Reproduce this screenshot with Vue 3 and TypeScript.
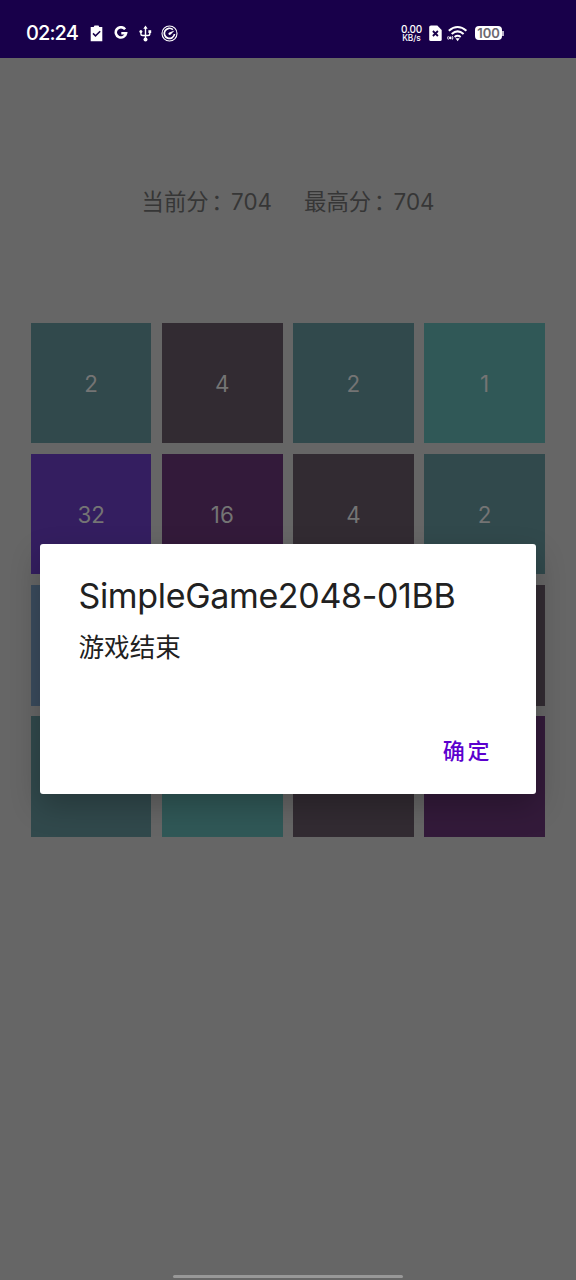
<script setup lang="ts">
interface Tile {
  kind: string
  value?: number
}

const tiles: Tile[] = [
  { kind: 'two', value: 2 },
  { kind: 'four', value: 4 },
  { kind: 'two', value: 2 },
  { kind: 'one', value: 1 },
  { kind: 'thirty-two', value: 32 },
  { kind: 'sixteen', value: 16 },
  { kind: 'four', value: 4 },
  { kind: 'two', value: 2 },
  { kind: 'eight' },
  { kind: 'two' },
  { kind: 'one' },
  { kind: 'four' },
  { kind: 'two' },
  { kind: 'one' },
  { kind: 'four' },
  { kind: 'sixteen' },
]
</script>

<template>
  <div class="screen">
    <header class="status">
      <span class="clock">02:24</span>
      <svg class="clipboard" width="13" height="17" viewBox="0 0 13 17">
        <path d="M.7 2h3l.8-1.600h4L9.300 2h3v14.300H.7z" fill="#fff" />
        <path d="M3 8.400l2.500 2.500 4.700-4.700" fill="none" stroke="#18004a" stroke-width="1.500" />
      </svg>
      <svg class="google" width="14" height="14" viewBox="0 0 14 14">
        <path d="M11.100 3.200A5.200 5.200 0 1 0 12.100 7.200H7.300" fill="none" stroke="#fff" stroke-width="2.500" />
      </svg>
      <svg class="usb" width="13" height="17" viewBox="0 0 13 17">
        <path d="M6.500 2v12M1.900 6.500v2.200q0 1.800 1.800 1.800h5.300q1.800 0 1.800-1.800V6.500" fill="none" stroke="#fff" stroke-width="1.400" />
        <path d="M4.300 3.800L6.500.6l2.200 3.200z" fill="#fff" />
        <circle cx="6.500" cy="14.400" r="2" fill="#fff" />
        <circle cx="1.900" cy="6.600" r="1.500" fill="#fff" />
        <path d="M9.400 5.200h2.800V8H9.400z" fill="#fff" />
      </svg>
      <svg class="gauge" width="17" height="17" viewBox="0 0 17 17">
        <circle cx="8.500" cy="8.500" r="7.500" fill="none" stroke="#fff" stroke-width="1.100" />
        <path d="M11.900 4.600A5.100 5.100 0 1 0 13.500 9" fill="none" stroke="#fff" stroke-width="1.700" />
        <path d="M13.600 5.400L9.700 9.400Q8.500 10.400 7.500 9.300 7 8 8.300 7.400z" fill="#fff" />
      </svg>
      <div class="speed"><span class="rate">0.00</span><span class="unit">KB/s</span></div>
      <svg class="sim" width="13" height="17" viewBox="0 0 13 17">
        <path d="M2 .5h6.300L12.700 5v9.500q0 1.500-1.500 1.500H1.700Q.2 16 .2 14.500V2Q.2.500 2 .5z" fill="#fff" />
        <path d="M3.900 6l5 5M8.900 6l-5 5" stroke="#18004a" stroke-width="1.800" />
      </svg>
      <svg class="wifi" width="21" height="17" viewBox="0 0 21 17">
        <g fill="none" stroke="#fff">
          <path d="M1.800 5.700Q10.600 -1.700 19.400 5.700" stroke-width="2.100" />
          <path d="M4.700 9Q10.600 3.900 16.600 9" stroke-width="2.100" />
          <path d="M7.600 12Q10.600 9.600 13.700 12" stroke-width="2" />
          <path d="M1.300 11.200q-1.300 1.700 0 3.400M5.300 11.200q1.300 1.700 0 3.400" stroke-width="1" />
        </g>
        <path d="M8.500 13.300h4.200l-2.100 2.900z" fill="#fff" />
        <circle cx="3.300" cy="12.900" r="1.300" fill="#fff" />
      </svg>
      <div class="battery"><span>100</span><i></i></div>
    </header>

    <main class="game">
      <div class="scores">
        <span class="score">当前分<i>：</i><b>704</b></span>
        <span class="score">最高分<i>：</i><b>704</b></span>
      </div>
      <div class="board">
        <div v-for="(tile, i) in tiles" :key="i" class="tile" :class="tile.kind">{{ tile.value }}</div>
      </div>
    </main>

    <div class="overlay">
      <section class="dialog" role="dialog">
        <h1>SimpleGame2048-01BB</h1>
        <p>游戏结束</p>
        <button type="button">确定</button>
      </section>
    </div>
    <div class="home-bar"></div>
  </div>
</template>

<style>
body {
  margin: 0;
}
</style>

<style scoped>
.screen {
  position: relative;
  width: 576px;
  height: 1280px;
  overflow: hidden;
  background: #666;
  font-family: Inter, "Noto Sans CJK SC", sans-serif;
}
.status {
  display: flex;
  align-items: center;
  box-sizing: border-box;
  height: 57.600px;
  padding: 9px 0 0 26px;
  background: #18004a;
  color: #fff;
}
.status svg {
  flex: none;
}
.clock {
  width: 64px;
  font-size: 20px;
  font-weight: 500;
  letter-spacing: -0.900px;
  line-height: 24px;
  white-space: nowrap;
}
.google {
  margin-left: 11px;
}
.usb {
  margin-left: 11px;
}
.gauge {
  margin-left: 8.500px;
}
.speed {
  display: flex;
  flex-direction: column;
  align-items: center;
  width: 22px;
  margin-left: 223px;
}
.rate {
  font-size: 10px;
  font-weight: 500;
  letter-spacing: -0.200px;
  line-height: 9px;
}
.unit {
  font-size: 8.300px;
  font-weight: 500;
  line-height: 8px;
}
.sim {
  margin-left: 6px;
}
.wifi {
  margin-left: 5px;
}
.battery {
  display: flex;
  align-items: center;
  justify-content: center;
  position: relative;
  width: 27px;
  height: 14px;
  margin-left: 7.500px;
  border-radius: 4px;
  background: #fff;
  color: #6b6870;
  font-size: 13px;
  font-weight: 600;
  line-height: 14px;
}
.battery i {
  position: absolute;
  left: 27px;
  top: 5px;
  width: 1.500px;
  height: 5px;
  background: #b9b1c8;
}
.scores {
  display: flex;
  justify-content: center;
  gap: 32px;
  height: 34px;
  padding-top: 127px;
  color: #363636;
  font-size: 22.400px;
  line-height: 34px;
}
.score {
  display: flex;
  white-space: nowrap;
}
.score i {
  box-sizing: border-box;
  width: 22.400px;
  padding-left: 2.500px;
  font-style: normal;
}
.score b {
  font-weight: 400;
}
.board {
  display: grid;
  grid-template-columns: repeat(4, 120.500px);
  grid-auto-rows: 120.500px;
  gap: 10.650px;
  margin: 104.200px 0 0 30.900px;
}
.tile {
  display: flex;
  align-items: center;
  justify-content: center;
  padding-top: 1px;
  box-sizing: border-box;
  color: #747474;
  font-size: 22.400px;
}
.one {
  background: #305857;
}
.two {
  background: #31494c;
}
.four {
  background: #322b32;
}
.eight {
  background: #3a4b5d;
}
.sixteen {
  background: #331a3a;
}
.thirty-two {
  background: #341e60;
}
.overlay {
  position: absolute;
  inset: 0;
  padding: 543.700px 40px 0;
}
.dialog {
  display: flex;
  flex-direction: column;
  box-sizing: border-box;
  height: 250.300px;
  padding: 30px 39px 0 38.500px;
  border-radius: 3px;
  background: #fff;
  box-shadow: 0 12px 30px rgba(0, 0, 0, 0.24);
  color: #212121;
}
.dialog h1 {
  margin: 0;
  font-size: 34px;
  font-weight: 400;
  letter-spacing: -0.340px;
  line-height: 44px;
  white-space: nowrap;
}
.dialog p {
  margin: 12px 0 0;
  font-size: 25.600px;
  line-height: 36px;
}
.dialog button {
  align-self: flex-end;
  margin: 67px 5px 0 0;
  padding: 0;
  border: 0;
  background: none;
  color: #5b00ce;
  font: 500 22px/32px "Noto Sans CJK SC", sans-serif;
  letter-spacing: 2.600px;
}
.home-bar {
  position: absolute;
  left: 173px;
  bottom: 2px;
  width: 230px;
  height: 3px;
  border-radius: 1.500px;
  background: #989898;
}
</style>
